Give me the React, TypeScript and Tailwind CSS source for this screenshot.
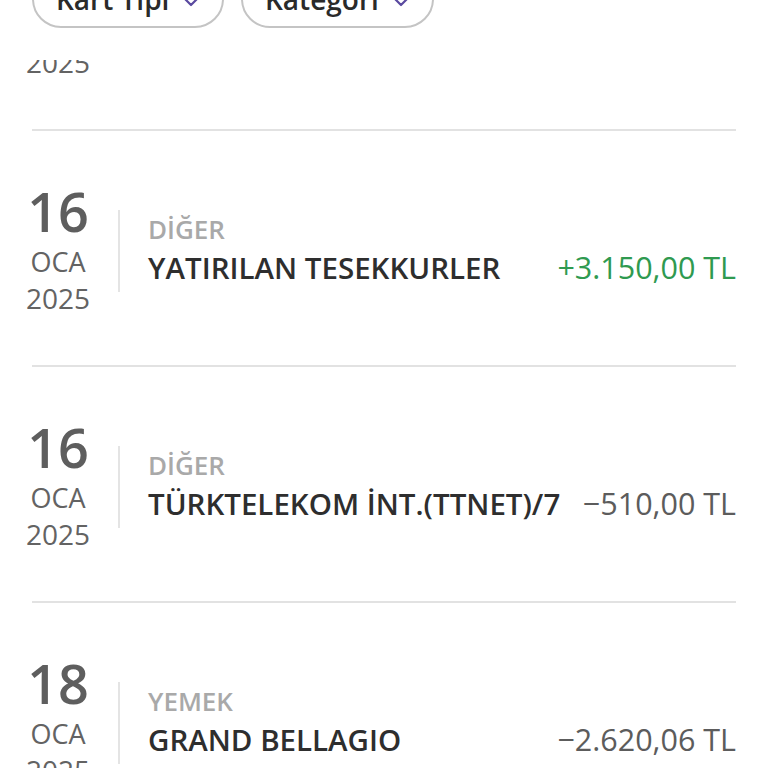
const font = { fontFamily: '"Open Sans", "Noto Sans", sans-serif' }

type Tx = {
  day: string
  month: string
  year: string
  category: string
  title: string
  amount: string
  positive?: boolean
}

const rows: Tx[] = [
  { day: "15", month: "OCA", year: "2025", category: "DİĞER", title: "", amount: "" },
  { day: "16", month: "OCA", year: "2025", category: "DİĞER", title: "YATIRILAN TESEKKURLER", amount: "+3.150,00 TL", positive: true },
  { day: "16", month: "OCA", year: "2025", category: "DİĞER", title: "TÜRKTELEKOM İNT.(TTNET)/7", amount: "−510,00 TL" },
  { day: "18", month: "OCA", year: "2025", category: "YEMEK", title: "GRAND BELLAGIO", amount: "−2.620,06 TL" },
]

function Chevron() {
  return (
    <svg width="20" height="12" viewBox="0 0 20 12" fill="none" className="ml-[12px] mt-[4px]">
      <path d="M2 2 L10 10 L18 2" stroke="#5b4aa0" strokeWidth="2.2" strokeLinecap="round" strokeLinejoin="round" />
    </svg>
  )
}

function Chip({ label, width }: { label: string; width: string }) {
  return (
    <div className={`flex h-[58px] ${width} items-center justify-start rounded-full border-2 border-[#c4c4c4] pl-[22px] bg-white`}>
      <span className="text-[28px] leading-[36px] font-semibold text-[#2a2a2a]">{label}</span>
      <Chevron />
    </div>
  )
}

function Row({ tx }: { tx: Tx }) {
  return (
    <div className="border-t-2 border-[#e2e2e2]">
      <div className="flex h-[234px] items-start pt-[53px]">
        <div className="flex w-[52px] shrink-0 flex-col items-center">
          <div className="whitespace-nowrap text-[54px] leading-[54px] font-semibold text-[#5e5e5e]">{tx.day}</div>
          <div className="mt-[6px] text-[27px] leading-[36px] font-medium text-[#636363]">{tx.month}</div>
          <div className="text-[28px] leading-[36px] font-medium text-[#636363]">{tx.year}</div>
        </div>
        <div className="ml-[34px] mt-[26px] flex flex-1 items-center">
          <div className="h-[82px] w-[2px] bg-[#e4e4e4]" />
          <div className="ml-[28px] -mt-[4px] flex flex-1 flex-col">
            <div className="text-[26px] leading-[32px] font-semibold text-[#a9a9a9]">{tx.category}</div>
            <div className="mt-[4px] flex items-baseline justify-between">
              <span className="whitespace-nowrap text-[29.5px] leading-[36px] font-semibold text-[#2e2e2e]">{tx.title}</span>
              <span
                className={
                  tx.positive
                    ? "whitespace-nowrap text-[30.5px] leading-[36px] font-medium text-[#2f9a50]"
                    : "whitespace-nowrap text-[30.5px] leading-[36px] font-medium text-[#5c5c5c]"
                }
              >
                {tx.amount}
              </span>
            </div>
          </div>
        </div>
      </div>
    </div>
  )
}

export default function App() {
  return (
    <div className="h-[768px] w-[768px] overflow-hidden bg-white" style={font}>
      <div className="relative z-10 h-[60px] overflow-hidden bg-white px-8">
        <div className="-mt-[30px] flex gap-[17px]">
          <Chip label="Kart Tipi" width="w-[192px]" />
          <Chip label="Kategori" width="w-[193px]" />
        </div>
      </div>
      <div className="h-[708px] overflow-hidden px-8">
        <div className="-mt-[167px]">
          {rows.map((tx, i) => (
            <Row key={i} tx={tx} />
          ))}
        </div>
      </div>
    </div>
  )
}
